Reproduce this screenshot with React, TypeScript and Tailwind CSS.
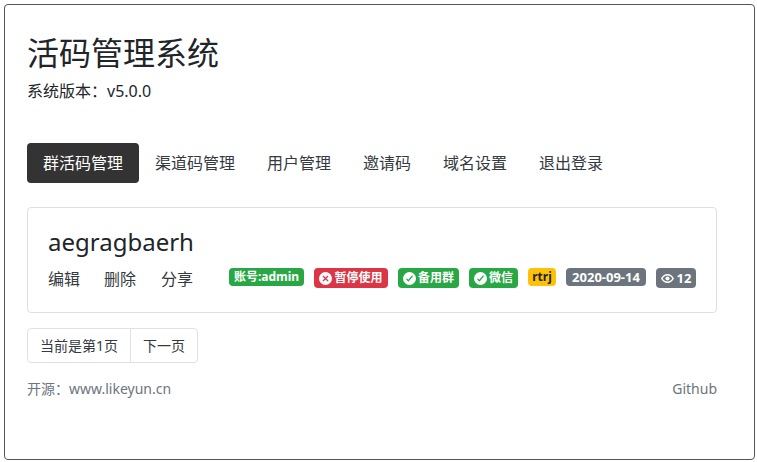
import React from 'react'

const font = { fontFamily: '"Noto Sans", "Noto Sans CJK SC", sans-serif' }

const CircleCheck = () => (
  <svg viewBox="0 0 16 16" className="h-[13px] w-[13px] shrink-0" fill="currentColor">
    <path d="M8 0a8 8 0 1 0 0 16A8 8 0 0 0 8 0zm3.900 5.600L7.200 11.400a.8.8 0 0 1-1.200 0L4.100 9.300a.8.8 0 0 1 1.100-1.100l1.400 1.300 4.100-5a.8.8 0 1 1 1.200 1.100z" />
  </svg>
)

const CircleX = () => (
  <svg viewBox="0 0 16 16" className="h-[13px] w-[13px] shrink-0" fill="currentColor">
    <path d="M8 0a8 8 0 1 0 0 16A8 8 0 0 0 8 0zM5.400 4.300L8 6.900l2.600-2.600 1.100 1.100L9.100 8l2.600 2.600-1.100 1.100L8 9.100l-2.600 2.600-1.100-1.100L6.900 8 4.300 5.400z" />
  </svg>
)

const Eye = () => (
  <svg viewBox="0 0 16 16" className="h-[13px] w-[13px] shrink-0" fill="currentColor">
    <path d="M8 2.500C4.500 2.500 1.600 4.800 0 8c1.600 3.200 4.500 5.500 8 5.500s6.400-2.300 8-5.500c-1.600-3.200-4.500-5.500-8-5.500zm0 9.200C5.600 11.700 3.400 10.200 2 8c1.400-2.200 3.600-3.700 6-3.700s4.600 1.500 6 3.700c-1.400 2.200-3.600 3.700-6 3.700z" />
    <circle cx="8" cy="8" r="2.500" />
  </svg>
)

const Badge = ({ className, children }: { className: string; children: React.ReactNode }) => (
  <span className={`inline-flex items-center justify-center gap-[2px] rounded-[4px] leading-none font-bold ${className}`}>
    {children}
  </span>
)

export default function App() {
  const tabs = ['渠道码管理', '用户管理', '邀请码', '域名设置', '退出登录']

  return (
    <div className="h-[462px] w-[757px] bg-white p-[4px] text-[#212529]" style={font}>
      <div className="h-[456px] w-[751px] rounded-[4px] border border-[#555] py-[22px] pr-[37px] pl-[22px]">
        <h1 className="mt-[2px] text-[32px] leading-[48px]">活码管理系统</h1>
        <p className="mt-[2px] text-[16px] leading-[24px]">系统版本：v5.0.0</p>

        {/* Nav */}
        <nav className="mt-[40px] flex text-[16px] leading-[24px]">
          <a className="rounded-[4px] bg-[#333] px-[16px] py-[8px] text-white">群活码管理</a>
          {tabs.map((tab) => (
            <a key={tab} className="px-[16px] py-[8px] text-[#343a40]">{tab}</a>
          ))}
        </nav>

        {/* Card */}
        <div className="mt-[24px] h-[106px] rounded-[4px] border border-[#dfdfdf] px-[20px] pt-[18px]">
          <h5 className="text-[24px] leading-[32px] text-[#212529]">aegragbaerh</h5>
          <div className="mt-[9px] flex items-start text-[16px] leading-[24px]">
            <a className="text-[#343a40]">编辑</a>
            <a className="ml-[24px] text-[#343a40]">删除</a>
            <a className="ml-[25px] text-[#343a40]">分享</a>
            <div className="ml-[36px] flex items-start gap-[10px] pt-[1px]">
              <Badge className="h-[18px] w-[75px] bg-[#28a745] text-[12px] text-white">账号:admin</Badge>
              <Badge className="h-[20px] w-[74px] bg-[#dc3545] text-[12px] text-white"><CircleX />暂停使用</Badge>
              <Badge className="h-[20px] w-[61px] bg-[#28a745] text-[12px] text-white"><CircleCheck />备用群</Badge>
              <Badge className="h-[20px] w-[49px] bg-[#28a745] text-[12px] text-white"><CircleCheck />微信</Badge>
              <Badge className="h-[18px] w-[28px] bg-[#ffc107] text-[12px] text-[#212529]">rtrj</Badge>
              <Badge className="h-[18px] w-[80px] bg-[#6c757d] text-[13px] text-white">2020-09-14</Badge>
              <Badge className="h-[20px] w-[40px] gap-[3px] bg-[#6c757d] text-[13px] text-white"><Eye />12</Badge>
            </div>
          </div>
        </div>

        {/* Pager */}
        <div className="mt-[15px] flex h-[35px] w-fit rounded-[4px] border border-[#dee2e6] text-[14px] leading-[33px] text-[#343a40]">
          <span className="border-r border-[#dee2e6] px-[12px]">当前是第1页</span>
          <span className="px-[12px]">下一页</span>
        </div>

        {/* Footer */}
        <div className="mt-[15px] flex justify-between text-[14px] leading-[21px] text-[#6c757d]">
          <span>开源：www.likeyun.cn</span>
          <span>Github</span>
        </div>
      </div>
    </div>
  )
}
